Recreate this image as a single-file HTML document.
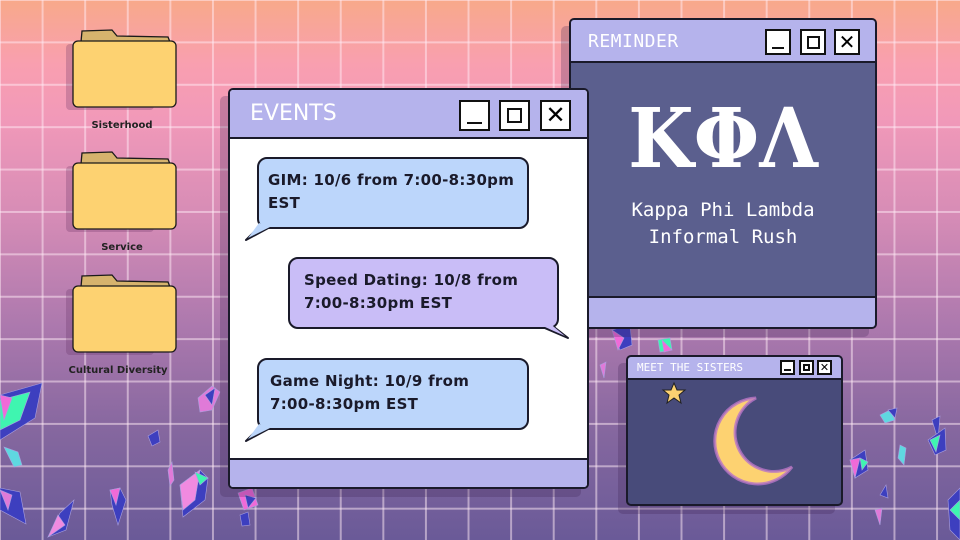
<!DOCTYPE html>
<html><head><meta charset="utf-8"><style>
*{margin:0;padding:0;box-sizing:border-box}
body{width:960px;height:540px;overflow:hidden;position:relative;font-family:"DejaVu Sans","Liberation Sans",sans-serif;
background:linear-gradient(180deg,#f8a98a 0%,#f99fb0 12%,#f199b9 22%,#d68cb6 40%,#ad79ae 60%,#85679f 80%,#6a5a98 100%)}
.grid{position:absolute;inset:0;background-image:linear-gradient(90deg,rgba(255,235,245,.5) 2px,transparent 2px),linear-gradient(180deg,rgba(255,235,245,.5) 2px,transparent 2px);background-size:42.6px 42.4px;background-position:-1px -1px}
.win{position:absolute;border:2px solid #1a1a2a;border-radius:5px;overflow:hidden;box-shadow:-8px 8px 0 rgba(60,30,80,.25)}
.tb{position:absolute;left:0;right:0;top:0;background:#b5b3ec;border-bottom:2px solid #1a1a2a;color:#fff;font-family:"DejaVu Sans Mono","Liberation Mono",monospace}
.btn{position:absolute;border:2px solid #111;background:#fff}
.flab{position:absolute;font-size:10px;font-weight:bold;color:#222;text-align:center;width:140px}
.bub{position:absolute;border:2px solid #1a1a2a;border-radius:10px;font-family:"DejaVu Sans",sans-serif;font-weight:bold;font-size:15px;color:#1a1a2a;line-height:23px;padding:10px 0 0 9px;letter-spacing:.3px}
</style></head><body>
<div class="grid"></div>

<svg style="position:absolute;left:0;top:0" width="240" height="540">
<g id="f" >
<rect x="66" y="44" width="88" height="66" rx="4" fill="rgba(90,40,90,.25)"/>
<path d="M81 42 L82 31 L112 30 L117 36 L168 37 L170 42Z" fill="#d6b36d" stroke="#1a1a1a" stroke-width="1.3"/>
<rect x="73" y="41" width="103" height="66" rx="5" fill="#fdd271" stroke="#1a1a1a" stroke-width="1.3"/>
</g>
<use href="#f" y="122"/>
<use href="#f" y="245"/>
</svg>
<div class="flab" style="left:52px;top:120px">Sisterhood</div>
<div class="flab" style="left:52px;top:242px">Service</div>
<div class="flab" style="left:48px;top:365px">Cultural Diversity</div>

<svg style="position:absolute;left:0;top:0" width="960" height="540">
<g stroke="#aaa0e0" stroke-width=".6">
<polygon points="0,395 42,383 35,418 0,440" fill="#3d3fbf"/><polygon points="0,400 30,392 20,420 0,430" fill="#3ff5b0"/><polygon points="0,395 12,398 4,420" fill="#f06ad8"/>
<polygon points="4,447 18,452 22,465 14,467" fill="#5fd8e0"/>
<polygon points="0,488 20,492 26,524 0,510" fill="#3d3fbf"/><polygon points="0,490 12,495 8,510" fill="#e07ad8"/>
<polygon points="48,537 60,513 74,500 66,530" fill="#3d3fbf"/><polygon points="48,537 58,515 65,525" fill="#f08ae0"/>
<polygon points="110,490 120,488 126,500 118,525 112,505" fill="#3d3fbf"/><polygon points="110,490 120,488 116,505" fill="#f06ad8"/>
<polygon points="148,436 158,430 160,442 152,446" fill="#3d3fbf"/>
<polygon points="168,470 172,462 174,480 170,486" fill="#e07ad8"/>
<polygon points="180,485 200,470 208,478 205,500 183,517" fill="#3d3fbf"/><polygon points="180,485 200,470 195,500 183,510" fill="#f08ae0"/><polygon points="195,472 208,478 200,485" fill="#3ff5b0"/>
<polygon points="198,398 212,386 220,392 212,410 200,412" fill="#e07ad8"/><polygon points="205,395 215,388 212,405" fill="#3d3fbf"/>
<polygon points="238,493 252,488 258,505 244,510" fill="#f06ad8"/><polygon points="245,495 256,498 248,508" fill="#3d3fbf"/>
<polygon points="240,515 248,512 250,525 242,526" fill="#3d3fbf"/>
<polygon points="612,330 630,325 632,345 620,350" fill="#3d3fbf"/><polygon points="612,330 624,338 618,350" fill="#f06ad8"/>
<polygon points="658,340 670,338 672,350 660,352" fill="#3ff5b0"/><polygon points="662,340 672,350 664,352" fill="#f06ad8"/>
<polygon points="600,365 606,362 604,378" fill="#e07ad8"/>
<polygon points="850,460 865,450 868,470 855,478" fill="#3d3fbf"/><polygon points="850,460 860,458 855,478" fill="#f06ad8"/><polygon points="860,458 868,462 862,470" fill="#3ff5b0"/>
<polygon points="880,415 890,410 895,420 885,423" fill="#5fd8e0"/><polygon points="888,410 897,408 895,418" fill="#3d3fbf"/>
<polygon points="932,420 940,416 938,440" fill="#3d3fbf"/>
<polygon points="928,440 945,428 946,450 935,455" fill="#3d3fbf"/><polygon points="930,440 940,435 936,452" fill="#3ff5b0"/>
<polygon points="900,445 906,448 904,465 898,458" fill="#5fd8e0"/>
<polygon points="948,500 960,488 960,540 950,530" fill="#3d3fbf"/><polygon points="950,510 960,500 960,520" fill="#3ff5b0"/>
<polygon points="880,495 886,485 888,498" fill="#3d3fbf"/>
<polygon points="875,510 882,508 880,525" fill="#e07ad8"/>
</g></svg>

<div class="win" style="left:569px;top:18px;width:308px;height:311px;background:#5b5f8e">
 <div class="tb" style="height:43px;font-size:18px;padding:11px 0 0 17px;letter-spacing:.5px">REMINDER</div>
 <div class="btn" style="left:194px;top:9px;width:26px;height:26px"><div style="position:absolute;left:5px;right:5px;bottom:4px;height:2px;background:#111"></div></div>
 <div class="btn" style="left:229px;top:9px;width:26px;height:26px"><div style="position:absolute;left:5px;top:5px;width:13px;height:13px;border:2px solid #111"></div></div>
 <div class="btn" style="left:263px;top:9px;width:26px;height:26px;font:20px/22px 'DejaVu Sans';text-align:center">✕</div>
 <div style="position:absolute;left:0;right:0;top:84px;text-align:center;color:#fff;font:bold 82px/70px 'DejaVu Serif','Liberation Serif',serif;transform:scaleX(0.92)">ΚΦΛ</div>
 <div style="position:absolute;left:0;right:0;top:177px;text-align:center;color:#fff;font:19px/27px 'DejaVu Sans Mono','Liberation Mono',monospace">Kappa Phi Lambda<br>Informal Rush</div>
 <div style="position:absolute;left:0;right:0;bottom:0;height:31px;background:#b5b3ec;border-top:2px solid #1a1a2a"></div>
</div>

<div class="win" style="left:626px;top:355px;width:217px;height:151px;background:#484b7a">
 <div class="tb" style="height:23px;font-size:11px;padding:4px 0 0 9px">MEET THE SISTERS</div>
 <div class="btn" style="left:152px;top:3px;width:15px;height:15px"><div style="position:absolute;left:2px;right:2px;bottom:2px;height:2px;background:#111"></div></div>
 <div class="btn" style="left:171px;top:3px;width:15px;height:15px"><div style="position:absolute;left:2px;top:2px;width:7px;height:7px;border:2px solid #111"></div></div>
 <div class="btn" style="left:189px;top:3px;width:15px;height:15px;font:11px/11px 'DejaVu Sans';text-align:center">✕</div>
 <svg style="position:absolute;left:0;top:0" width="217" height="151">
  <path d="M46 26 L49 33 L57 33 L51 38 L53 46 L46 41 L39 46 L41 38 L35 33 L43 33Z" fill="#fdd271" stroke="#222" stroke-width="1"/>
  <path d="M128 41 A43 43 0 1 0 164 110 A36 36 0 1 1 128 41Z" fill="#fdd271" stroke="#b874c8" stroke-width="3" stroke-opacity=".8"/>
 </svg>
</div>

<div class="win" style="left:228px;top:88px;width:361px;height:401px;background:#fff">
 <div class="tb" style="height:49px;font-size:22px;padding:11px 0 0 20px;font-family:'DejaVu Sans','Liberation Sans',sans-serif">EVENTS</div>
 <div class="btn" style="left:229px;top:10px;width:31px;height:31px"><div style="position:absolute;left:6px;right:6px;bottom:5px;height:2px;background:#111"></div></div>
 <div class="btn" style="left:269px;top:10px;width:31px;height:31px"><div style="position:absolute;left:6px;top:6px;width:15px;height:15px;border:2px solid #111"></div></div>
 <div class="btn" style="left:310px;top:10px;width:31px;height:31px;font:24px/27px 'DejaVu Sans';text-align:center">✕</div>
 <div style="position:absolute;left:0;right:0;bottom:0;height:29px;background:#b5b3ec;border-top:2px solid #1a1a2a"></div>
</div>
<svg style="position:absolute;left:0;top:0" width="960" height="540">
 <path d="M266 220 L246 240 L272 226Z" fill="#bcd6fb" stroke="#1a1a2a" stroke-width="2" stroke-linejoin="round"/>
 <path d="M545 320 L568 338 L540 326Z" fill="#c9bdf7" stroke="#1a1a2a" stroke-width="2" stroke-linejoin="round"/>
 <path d="M266 421 L246 441 L272 427Z" fill="#bcd6fb" stroke="#1a1a2a" stroke-width="2" stroke-linejoin="round"/>
</svg>
<div class="bub" style="left:257px;top:157px;width:272px;height:72px;background:#bcd6fb">GIM: 10/6 from 7:00-8:30pm<br>EST</div>
<div class="bub" style="left:288px;top:257px;width:271px;height:72px;background:#c9bdf7;padding-left:14px">Speed Dating: 10/8 from<br>7:00-8:30pm EST</div>
<div class="bub" style="left:257px;top:358px;width:272px;height:72px;background:#bcd6fb;padding-left:11px">Game Night: 10/9 from<br>7:00-8:30pm EST</div>
<svg style="position:absolute;left:0;top:0" width="960" height="540">
 <path d="M259 223 L248 238 L270 227" fill="#bcd6fb"/>
 <path d="M548 322 L565 336 L545 327" fill="#c9bdf7"/>
 <path d="M259 424 L248 439 L270 428" fill="#bcd6fb"/>
</svg>
</body></html>
